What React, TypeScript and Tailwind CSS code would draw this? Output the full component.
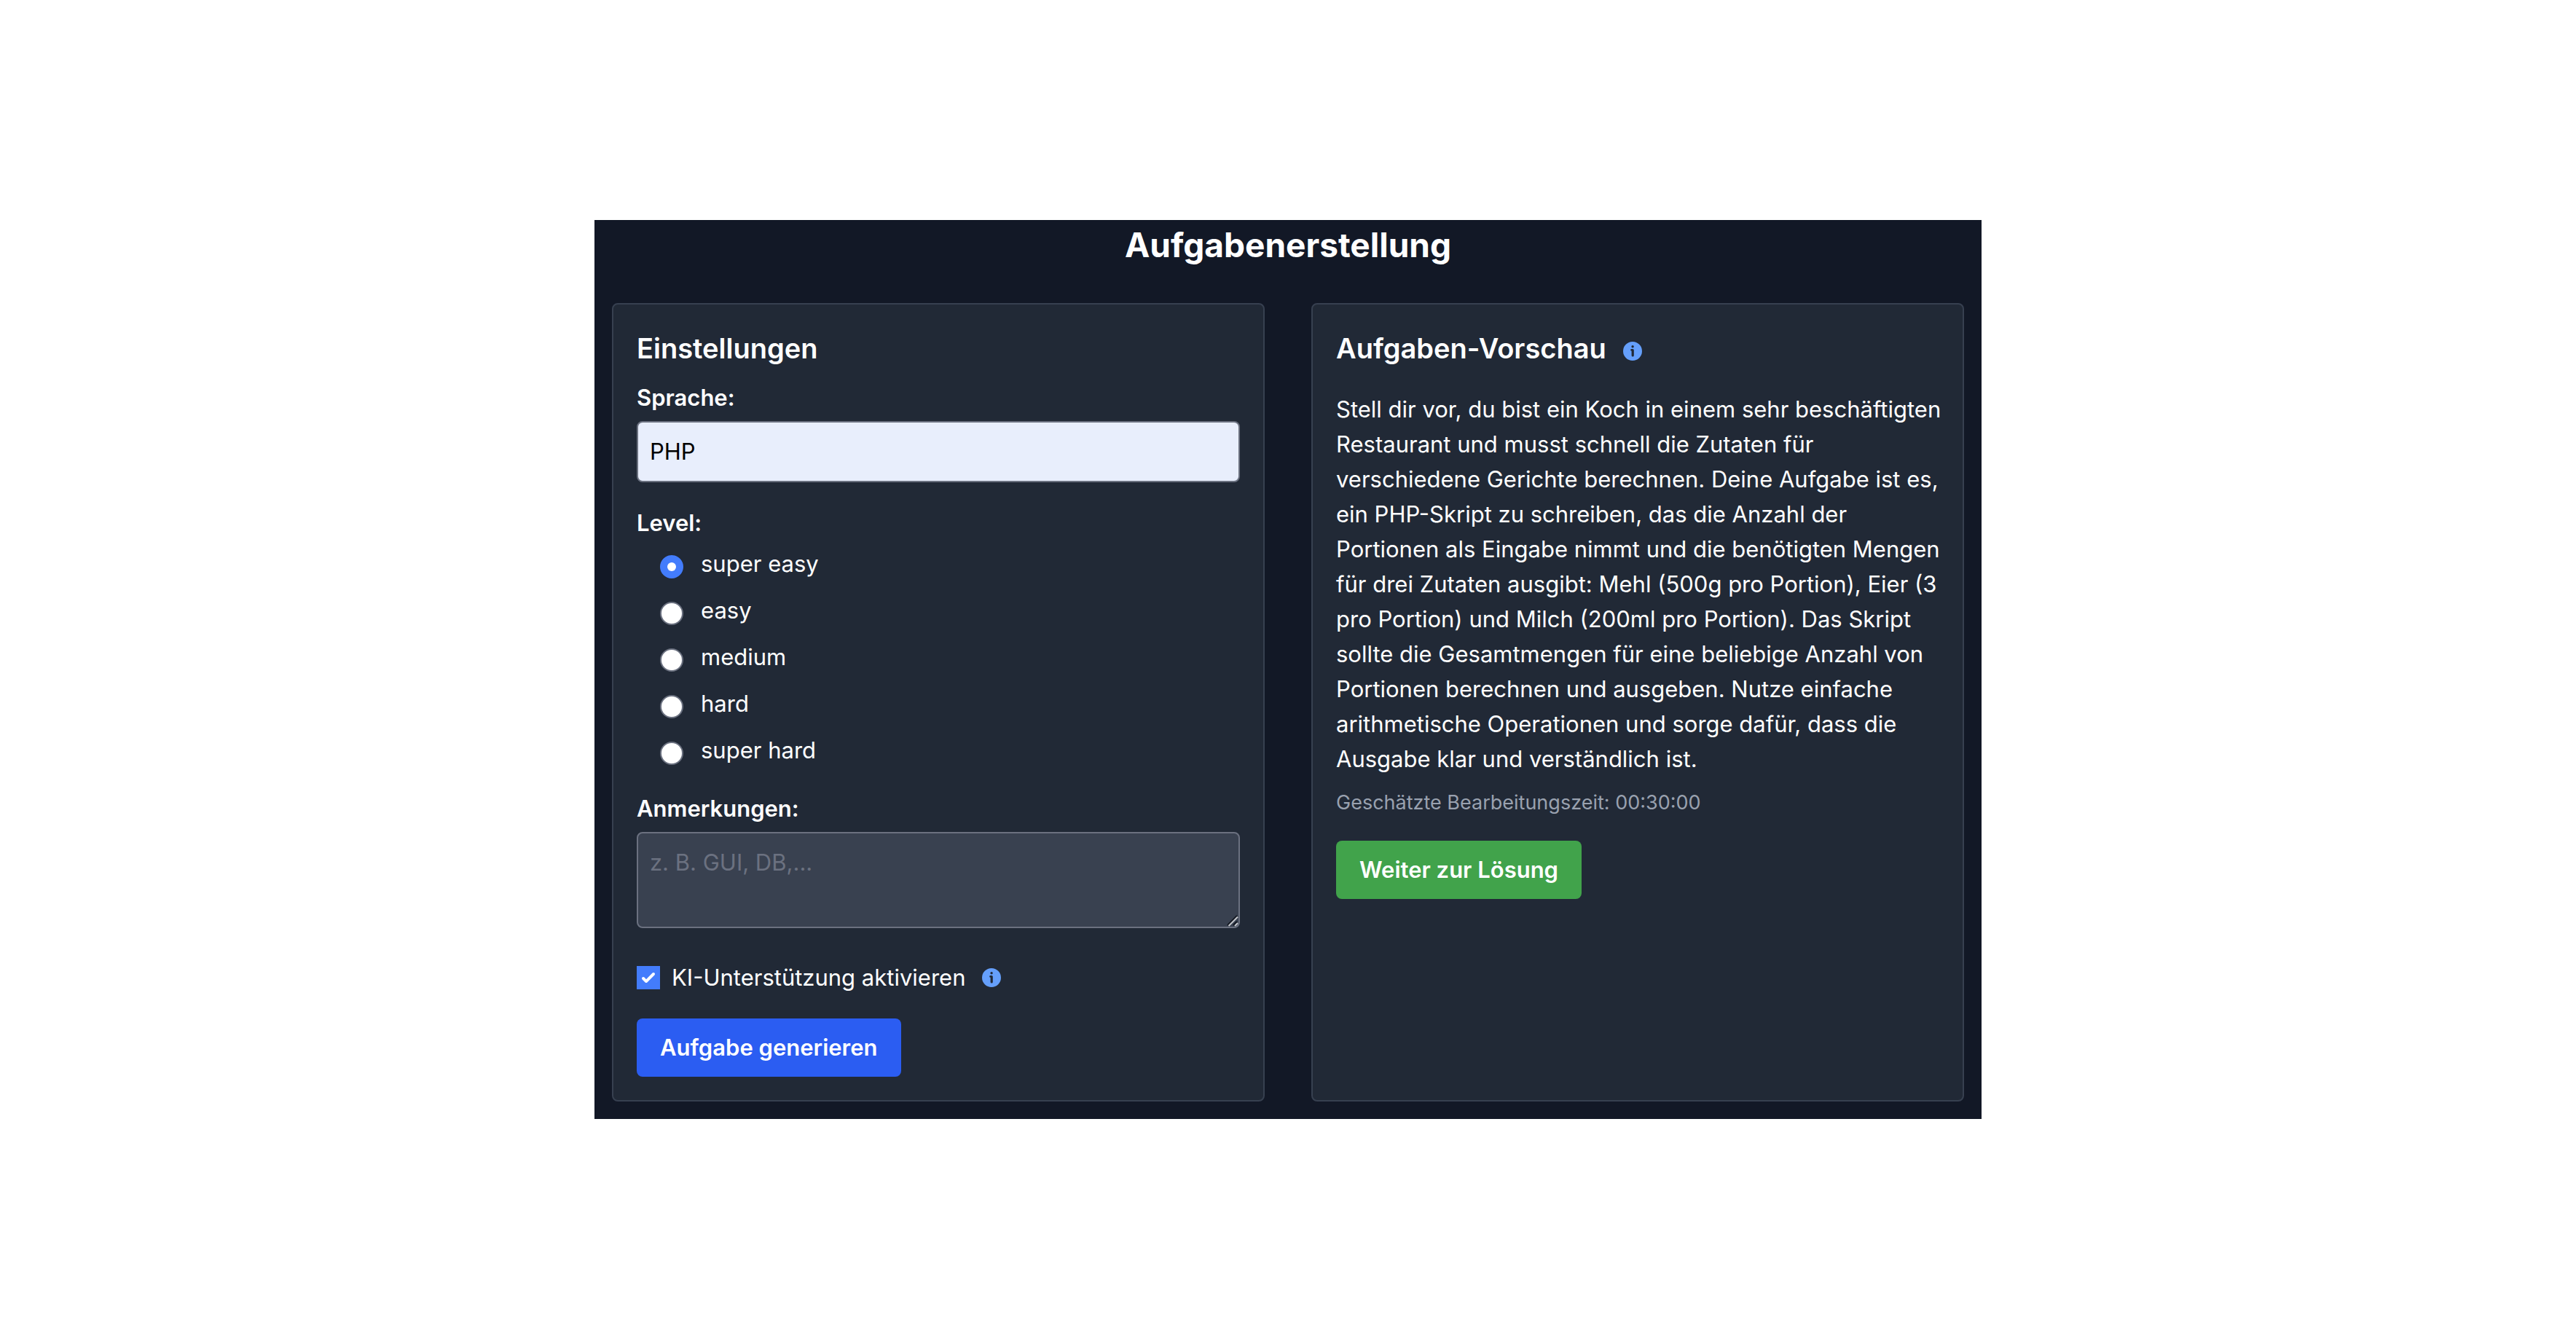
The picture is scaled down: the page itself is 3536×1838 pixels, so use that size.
import { useState } from "react";

const levels = ["super easy", "easy", "medium", "hard", "super hard"];

function InfoIcon() {
  return (
    <svg viewBox="0 0 32 32" className="size-8 shrink-0 text-[#659ffb]" fill="currentColor" aria-hidden="true">
      <path
        fillRule="evenodd"
        clipRule="evenodd"
        d="M16 3a13 13 0 1 0 0 26 13 13 0 0 0 0-26Zm.1 5a1.700 1.700 0 1 1 0 3.400 1.700 1.700 0 0 1 0-3.400Zm-1.500 5h1.600a1.600 1.600 0 0 1 1.600 1.600v7.400a1.600 1.600 0 0 1-3.200 0v-6.200a.9.9 0 0 1 0-2.800Z"
      />
    </svg>
  );
}

export default function App() {
  const [level, setLevel] = useState(levels[0]);
  const [language, setLanguage] = useState("PHP");
  const [ai, setAi] = useState(true);

  return (
    <div className="flex min-h-screen items-center justify-center bg-white font-['Inter',sans-serif] text-[31px] leading-12 text-white">
      <main className="w-full max-w-[1904px] bg-[#121826] px-6 pt-0.5 pb-6">
        <h1 className="mb-12 text-center text-[46px] leading-16 font-bold">Aufgabenerstellung</h1>
        <div className="grid grid-cols-2 gap-16">
          <form
            className="rounded-lg border-2 border-[#374050] bg-[#212936] p-8"
            onSubmit={(e) => e.preventDefault()}
          >
            <h2 className="mb-4 text-[38px] leading-14 font-semibold">Einstellungen</h2>
            <label htmlFor="language" className="mb-2 block font-semibold">
              Sprache:
            </label>
            <input
              id="language"
              type="text"
              value={language}
              onChange={(e) => setLanguage(e.target.value)}
              className="mb-8 block w-full rounded-lg border-2 border-[#6b7180] bg-[#e8eefc] p-4 text-black outline-none"
            />
            <fieldset className="mb-8">
              <legend className="mb-2 font-semibold">Level:</legend>
              <div className="flex flex-col gap-4 pl-8">
                {levels.map((name) => (
                  <label key={name} className="flex items-center gap-6">
                    <input
                      type="radio"
                      name="level"
                      checked={level === name}
                      onChange={() => setLevel(name)}
                      className="mt-2 grid size-8 shrink-0 appearance-none place-items-center rounded-full border-2 border-[#6b7180] bg-white before:size-3 before:rounded-full before:bg-white checked:border-[#437cfc] checked:bg-[#437cfc]"
                    />
                    {name}
                  </label>
                ))}
              </div>
            </fieldset>
            <label htmlFor="notes" className="mb-2 block font-semibold">
              Anmerkungen:
            </label>
            <div className="relative mb-11">
              <textarea
                id="notes"
                rows={2}
                placeholder="z. B. GUI, DB,..."
                className="block w-full resize-none rounded-lg border-2 border-[#6b7180] bg-[#394150] p-4 outline-none placeholder:text-[#6b7180]"
              />
              <svg viewBox="0 0 16 16" className="absolute right-0.5 bottom-0.5 size-4" fill="none" aria-hidden="true">
                <path d="M1 14 14 1M9 14l5-5" stroke="#11151f" strokeWidth="2" />
                <path d="M2.500 15 15 2.500M11 15l4-4" stroke="#c4c7cc" strokeWidth="2" />
              </svg>
            </div>
            <div className="mb-8 flex items-center gap-5">
              <label className="flex items-center gap-4">
                <span className="relative size-8 shrink-0">
                  <input
                    type="checkbox"
                    checked={ai}
                    onChange={(e) => setAi(e.target.checked)}
                    className="peer block size-8 appearance-none border-2 border-[#6b7180] bg-white checked:border-[#437cfc] checked:bg-[#437cfc]"
                  />
                  <svg
                    viewBox="0 0 16 16"
                    className="pointer-events-none absolute inset-0 hidden size-8 peer-checked:block"
                    fill="white"
                    aria-hidden="true"
                  >
                    <path d="M12.207 4.793a1 1 0 0 1 0 1.414l-5 5a1 1 0 0 1-1.414 0l-2-2a1 1 0 0 1 1.414-1.414L6.500 9.086l4.293-4.293a1 1 0 0 1 1.414 0z" />
                  </svg>
                </span>
                KI-Unterstützung aktivieren
              </label>
              <button type="button" aria-label="Info zur KI-Unterstützung">
                <InfoIcon />
              </button>
            </div>
            <button type="submit" className="block rounded-lg bg-[#2b5df2] px-8 py-4 font-semibold">
              Aufgabe generieren
            </button>
          </form>

          <section className="rounded-lg border-2 border-[#374050] bg-[#212936] py-8 pr-5 pl-8">
            <div className="mb-8 flex items-center gap-5">
              <h2 className="text-[38px] leading-14 font-semibold">Aufgaben-Vorschau</h2>
              <button type="button" aria-label="Info zur Vorschau" className="mt-2">
                <InfoIcon />
              </button>
            </div>
            <p className="mb-4">
              Stell dir vor, du bist ein Koch in einem sehr beschäftigten Restaurant und musst schnell die Zutaten für
              verschiedene Gerichte berechnen. Deine Aufgabe ist es, ein PHP-Skript zu schreiben, das die Anzahl der
              Portionen als Eingabe nimmt und die benötigten Mengen für drei Zutaten ausgibt: Mehl (500g pro Portion),
              Eier (3 pro Portion) und Milch (200ml pro Portion). Das Skript sollte die Gesamtmengen für eine beliebige
              Anzahl von Portionen berechnen und ausgeben. Nutze einfache arithmetische Operationen und sorge dafür,
              dass die Ausgabe klar und verständlich ist.
            </p>
            <p className="mb-8 text-[27px] leading-10 text-[#99a1af]">Geschätzte Bearbeitungszeit: 00:30:00</p>
            <button type="button" className="block rounded-lg bg-[#41a34b] px-8 py-4 font-semibold">
              Weiter zur Lösung
            </button>
          </section>
        </div>
      </main>
    </div>
  );
}
